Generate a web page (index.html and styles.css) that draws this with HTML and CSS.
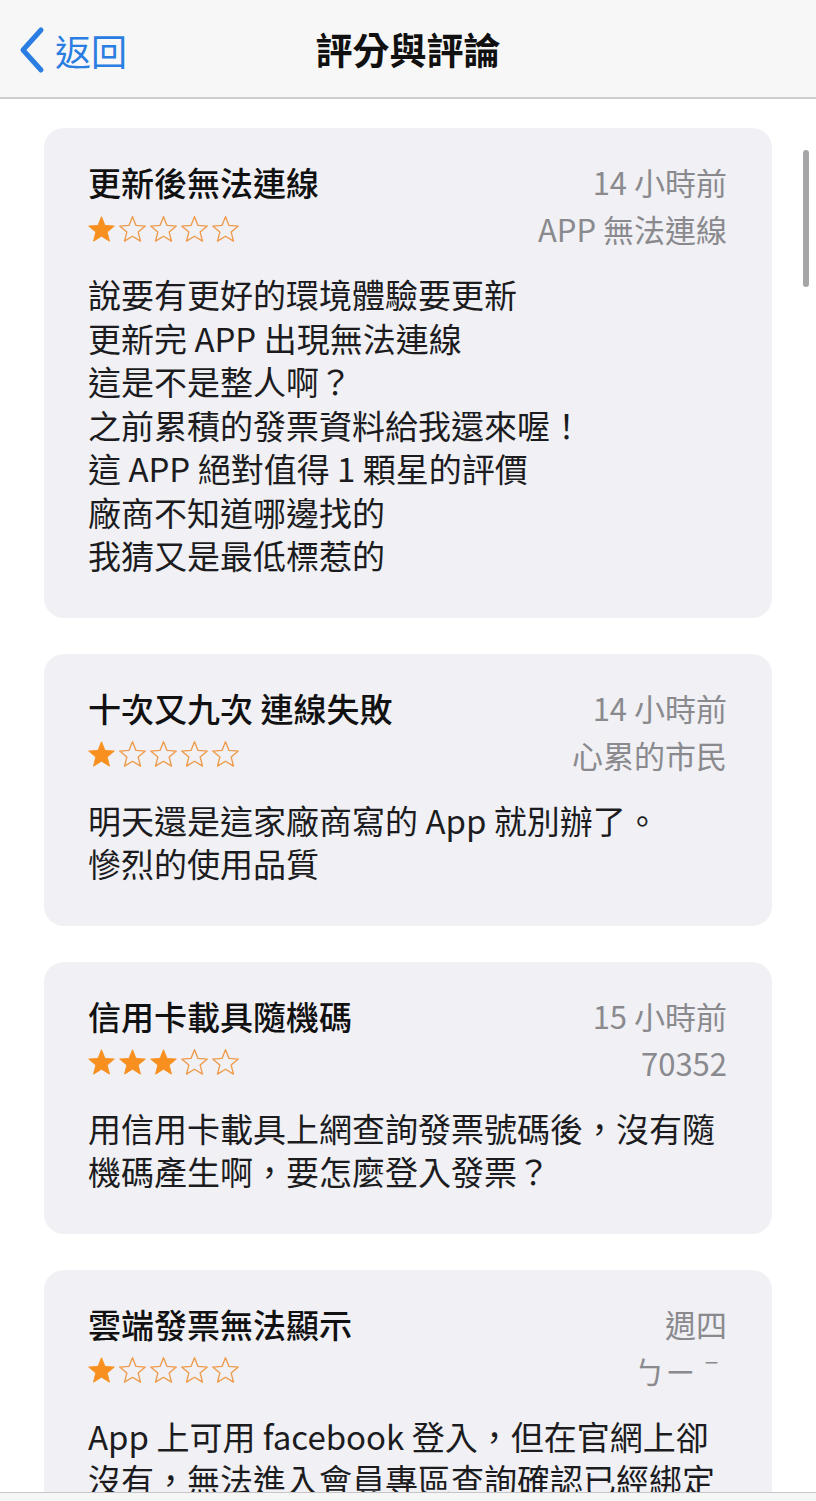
FILE: index.html
```html
<!DOCTYPE html>
<html lang="zh-Hant">
<head>
<meta charset="utf-8">
<title>評分與評論</title>
<link rel="stylesheet" href="styles.css">
</head>
<body>
<header class="navbar">
  <a class="back">
    <svg class="chevron" width="28" height="48" viewBox="0 0 28 48"><path d="M23 4 L5 24 L23 44" fill="none" stroke="currentColor" stroke-width="5" stroke-linecap="round" stroke-linejoin="round"/></svg>
    <span class="back-label">返回</span>
  </a>
  <h1 class="nav-title">評分與評論</h1>
</header>

<main class="list">
  <article class="card">
    <div class="card-head">
      <h2 class="card-title">更新後無法連線</h2>
      <span class="meta">14 小時前</span>
      <div class="stars" data-rating="1"></div>
      <span class="meta">APP 無法連線</span>
    </div>
    <p class="body">說要有更好的環境體驗要更新<br>更新完 APP 出現無法連線<br>這是不是整人啊？<br>之前累積的發票資料給我還來喔！<br>這 APP 絕對值得 1 顆星的評價<br>廠商不知道哪邊找的<br>我猜又是最低標惹的</p>
  </article>

  <article class="card">
    <div class="card-head">
      <h2 class="card-title">十次又九次 連線失敗</h2>
      <span class="meta">14 小時前</span>
      <div class="stars" data-rating="1"></div>
      <span class="meta">心累的市民</span>
    </div>
    <p class="body">明天還是這家廠商寫的 App 就別辦了。<br>慘烈的使用品質</p>
  </article>

  <article class="card">
    <div class="card-head">
      <h2 class="card-title">信用卡載具隨機碼</h2>
      <span class="meta">15 小時前</span>
      <div class="stars" data-rating="3"></div>
      <span class="meta">70352</span>
    </div>
    <p class="body">用信用卡載具上網查詢發票號碼後，沒有隨<br>機碼產生啊，要怎麼登入發票？</p>
  </article>

  <article class="card">
    <div class="card-head">
      <h2 class="card-title">雲端發票無法顯示</h2>
      <span class="meta">週四</span>
      <div class="stars" data-rating="1"></div>
      <span class="meta">ㄅㄧˉ</span>
    </div>
    <p class="body">App 上可用 facebook 登入，但在官網上卻<br>沒有，無法進入會員專區查詢確認已經綁定</p>
  </article>
</main>

<div class="scrollbar"></div>
<div class="bottom-bar"></div>

<script src="script.js"></script>
</body>
</html>
```

FILE: script.js
```js
(function () {
  var d = 'M12 0.6 L15.12 8.31 L23.4 8.9 L17.04 14.24 L19.1 22.3 L12 17.9 L4.9 22.3 L6.96 14.24 L0.6 8.9 L8.88 8.31 Z';
  var full = '<svg class="star" width="27" height="26" viewBox="0 0 24 23"><path d="' + d + '" fill="#f7901e" stroke="#f7901e" stroke-width="0.8" stroke-linejoin="round"/></svg>';
  var empty = '<svg class="star" width="27" height="26" viewBox="0 0 24 23"><path d="' + d + '" fill="none" stroke="#ef9a4a" stroke-width="1.2" stroke-linejoin="round"/></svg>';
  var els = document.querySelectorAll('.stars');
  for (var i = 0; i < els.length; i++) {
    var n = parseInt(els[i].getAttribute('data-rating'), 10);
    var h = '';
    for (var k = 0; k < 5; k++) h += k < n ? full : empty;
    els[i].innerHTML = h;
  }
})();
```

FILE: styles.css
```css
html, body {
  margin: 0;
  padding: 0;
  height: 1501px;
  overflow: hidden;
  background: #ffffff;
}
body {
  font-family: "Noto Sans CJK TC", "Noto Sans", "Liberation Sans", sans-serif;
  color: #1c1c1e;
}
.navbar {
  height: 97px;
  background: #f7f7f8;
  border-bottom: 2px solid #cdcdd0;
  display: flex;
  align-items: center;
  justify-content: center;
  position: relative;
}
.back {
  position: absolute;
  left: 18px;
  top: 26px;
  display: flex;
  align-items: center;
  color: #2a7de1;
}
.chevron {
  display: block;
}
.back-label {
  font-size: 36px;
  line-height: 48px;
  margin-left: 9px;
  font-weight: 400;
}
.nav-title {
  margin: 0;
  font-size: 37px;
  font-weight: 700;
  line-height: 48px;
  color: #111;
}
.list {
  padding: 29px 44px 0 44px;
  display: flex;
  flex-direction: column;
  gap: 36px;
}
.card {
  background: #f0f0f5;
  border-radius: 20px;
  padding: 34px 45px 40px 44px;
}
.card-head {
  display: grid;
  grid-template-columns: 1fr auto;
  grid-template-rows: 40px 40px;
  row-gap: 7px;
  align-items: center;
}
.card-title {
  margin: 0;
  font-size: 33px;
  font-weight: 500;
  line-height: 40px;
  color: #111;
  white-space: nowrap;
}
.meta {
  font-size: 31px;
  line-height: 40px;
  color: #8a8a8e;
  text-align: right;
  white-space: nowrap;
}
.stars {
  display: flex;
  gap: 4px;
  height: 26px;
  margin-top: -1px;
}
.star {
  display: block;
  overflow: visible;
}
.body {
  margin: 24px 0 0 0;
  font-size: 33px;
  line-height: 43.5px;
  white-space: nowrap;
  color: #1c1c1e;
}
.scrollbar {
  position: absolute;
  right: 7px;
  top: 150px;
  width: 6px;
  height: 137px;
  border-radius: 3px;
  background: #a6a6a9;
}
.bottom-bar {
  position: fixed;
  left: 0;
  right: 0;
  bottom: 0;
  height: 8px;
  background: #f6f6f7;
  border-top: 1px solid #c6c6c9;
}
```
